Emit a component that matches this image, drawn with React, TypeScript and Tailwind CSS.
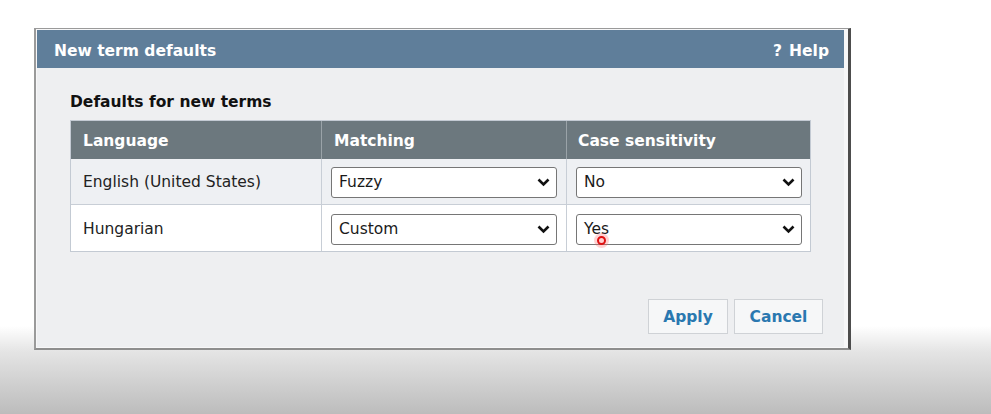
import React from "react";

const font = { fontFamily: '"DejaVu Sans", Verdana, sans-serif' };

function Chevron() {
  return (
    <svg width="13" height="9" viewBox="0 0 13 9" className="shrink-0">
      <polyline points="1.5,1.5 6.5,6.5 11.5,1.5" fill="none" stroke="#111" strokeWidth="2.6" />
    </svg>
  );
}

function FakeSelect({ value }: { value: string }) {
  return (
    <div className="flex h-[31px] w-[226px] items-center justify-between rounded-[3px] border border-[#767676] bg-white pl-[7px] pr-[6px] text-[15.5px] text-[#1a1a1a]">
      <span className="pt-[1px]">{value}</span>
      <Chevron />
    </div>
  );
}

export default function App() {
  const rows = [
    { lang: "English (United States)", match: "Fuzzy", cs: "No", bg: "bg-[#eef0f3]" },
    { lang: "Hungarian", match: "Custom", cs: "Yes", bg: "bg-white" },
  ];
  return (
    <div
      style={font}
      className="relative h-[414px] w-[991px] overflow-hidden bg-[linear-gradient(to_bottom,#ffffff_0px,#ffffff_326px,#e4e4e4_352px,#bcbcbc_414px)] pl-[34px] pt-[28px]"
    >
      <div className="w-[817px] border border-l-2 border-r-[3px] border-[#9a9a9a] border-r-[#4d4d4d] border-b-2 border-b-[#8e8e8e] bg-[#f7f7f8] p-px pr-[4px]">
        <div className="flex h-[38px] items-center justify-between bg-[#5f7e9a] pl-[17px] pr-[15px] pt-[5px] text-[15.5px] font-bold text-white">
          <span>New term defaults</span>
          <span className="flex items-center gap-[7px]">
            <span>?</span>
            <span>Help</span>
          </span>
        </div>
        <div className="flex h-[279px] flex-col bg-[#eeeff1] pl-[33px] pr-[21px] pt-[24px]">
          <div className="h-[20px] text-[15.5px] font-bold leading-[20px] text-[#111]">Defaults for new terms</div>
          <div className="mt-[8px] w-[741px] border border-[#c3cad3]">
            <div className="grid h-[38px] grid-cols-[251px_245px_243px] bg-[#6c787e] text-[15.5px] font-bold text-white">
              <div className="flex items-center border-r border-[#9aa3a8] pl-[12px] pt-[3px]">Language</div>
              <div className="flex items-center border-r border-[#9aa3a8] pl-[12px] pt-[3px]">Matching</div>
              <div className="flex items-center pl-[11px] pt-[3px]">Case sensitivity</div>
            </div>
            {rows.map((r, i) => (
              <div
                key={i}
                className={`grid h-[46px] grid-cols-[251px_245px_243px] text-[15.5px] text-[#222] ${r.bg} ${i === 0 ? "border-b border-[#c8ced6]" : ""}`}
              >
                <div className="flex items-center border-r border-[#c8ced6] pl-[12px] pt-[3px]">{r.lang}</div>
                <div className="flex items-center border-r border-[#c8ced6] pl-[9px] pt-[2px]">
                  <FakeSelect value={r.match} />
                </div>
                <div className="flex items-center pl-[9px] pt-[2px]">
                  <FakeSelect value={r.cs} />
                </div>
              </div>
            ))}
          </div>
          <div className="mt-[47px] flex justify-end gap-[6px]">
            <button className="h-[35px] w-[80px] border border-[#cfd2d6] bg-[#f6f7f8] pt-[2px] text-[15.5px] font-bold text-[#2a78b0]">
              Apply
            </button>
            <button className="h-[35px] w-[89px] border border-[#cfd2d6] bg-[#f6f7f8] pt-[2px] text-[15.5px] font-bold text-[#2a78b0]">
              Cancel
            </button>
          </div>
        </div>
      </div>
      <div className="absolute left-[594px] top-[233px] h-[15px] w-[15px] rounded-full bg-[#ff6b6b]/30 p-[3px]">
        <div className="h-full w-full rounded-full border-[2.5px] border-[#e01010]" />
      </div>
    </div>
  );
}
